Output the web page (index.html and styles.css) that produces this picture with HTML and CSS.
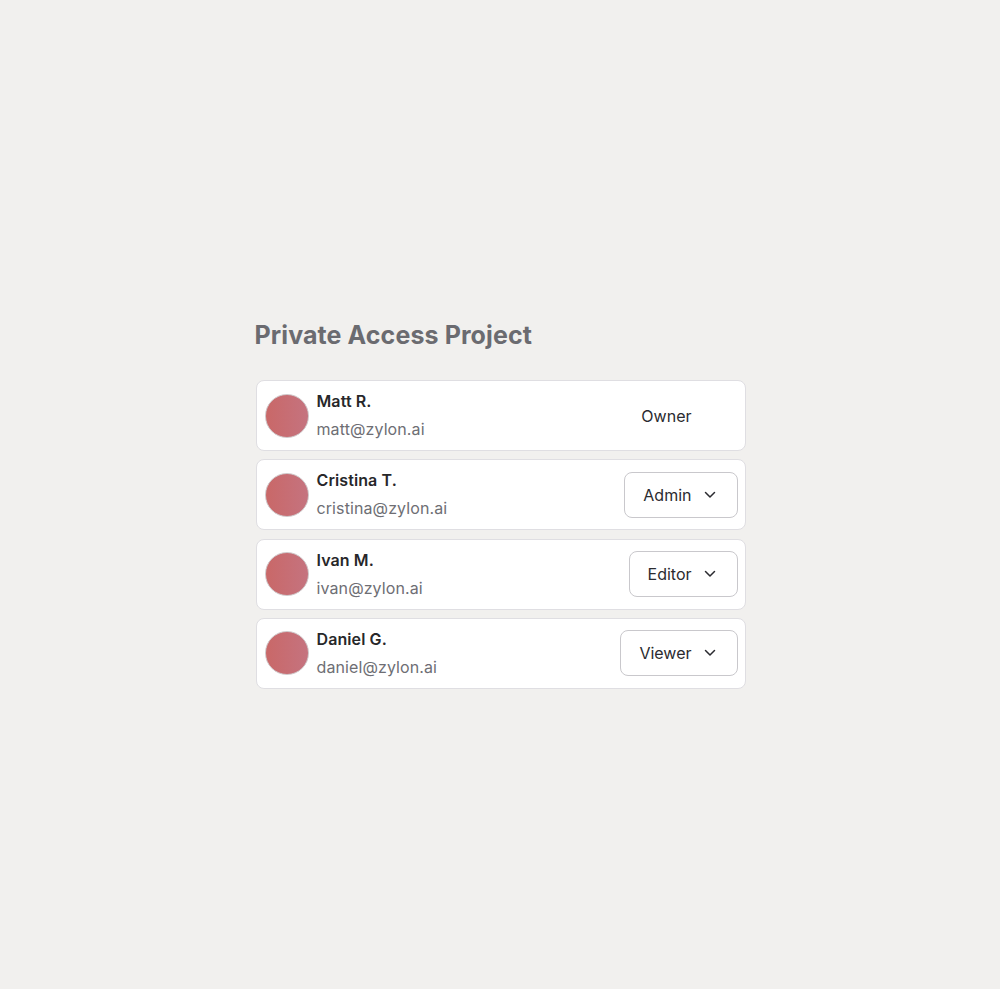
FILE: index.html
```html
<!DOCTYPE html>
<html>
<head>
<meta charset="utf-8">
<link rel="stylesheet" href="styles.css">
</head>
<body>
<main class="panel">
  <h1 class="title">Private Access Project</h1>
  <ul class="members">
    <li class="member">
      <div class="avatar"></div>
      <div class="info"><div class="name">Matt R.</div><div class="email">matt@zylon.ai</div></div>
      <span class="role-static">Owner</span>
    </li>
    <li class="member">
      <div class="avatar"></div>
      <div class="info"><div class="name">Cristina T.</div><div class="email">cristina@zylon.ai</div></div>
      <button class="role">Admin<svg class="chev" viewBox="0 0 12 8" width="12" height="8"><path d="M1.5 1.5 6 6l4.5-4.5" fill="none" stroke="#2b2b30" stroke-width="1.5" stroke-linecap="round" stroke-linejoin="round"/></svg></button>
    </li>
    <li class="member">
      <div class="avatar"></div>
      <div class="info"><div class="name">Ivan M.</div><div class="email">ivan@zylon.ai</div></div>
      <button class="role">Editor<svg class="chev" viewBox="0 0 12 8" width="12" height="8"><path d="M1.5 1.5 6 6l4.5-4.5" fill="none" stroke="#2b2b30" stroke-width="1.5" stroke-linecap="round" stroke-linejoin="round"/></svg></button>
    </li>
    <li class="member">
      <div class="avatar"></div>
      <div class="info"><div class="name">Daniel G.</div><div class="email">daniel@zylon.ai</div></div>
      <button class="role">Viewer<svg class="chev" viewBox="0 0 12 8" width="12" height="8"><path d="M1.5 1.5 6 6l4.5-4.5" fill="none" stroke="#2b2b30" stroke-width="1.5" stroke-linecap="round" stroke-linejoin="round"/></svg></button>
    </li>
  </ul>
</main>
</body>
</html>
```
FILE: styles.css
```css
html, body {
  margin: 0;
  padding: 0;
  background: #f1f0ee;
  font-family: Inter, "Noto Sans", sans-serif;
}
body {
  display: flex;
  justify-content: center;
  padding-top: 318px;
}
.panel {
  width: 490px;
  margin-left: 1px;
}
.title {
  margin: 0 0 28px -1px;
  font-size: 25px;
  line-height: 34px;
  font-weight: 700;
  color: #6b6b70;
  letter-spacing: 0.1px;
}
.members {
  list-style: none;
  margin: 0;
  padding: 0;
  display: flex;
  flex-direction: column;
  gap: 8.3px;
}
.member {
  display: flex;
  align-items: center;
  height: 71px;
  box-sizing: border-box;
  background: #fff;
  border: 1px solid #dfdee2;
  border-radius: 8px;
  padding: 0 7px 0 8px;
}
.avatar {
  width: 42px;
  height: 42px;
  border-radius: 50%;
  background: linear-gradient(90deg, #c96868 0%, #c5737f 100%);
  border: 1px solid #cfc7c9;
  flex: none;
}
.info {
  margin-left: 8px;
  flex: 1;
  padding-bottom: 1px;
}
.name {
  font-size: 16px;
  font-weight: 600;
  color: #27272a;
  line-height: 20px;
  letter-spacing: 0.1px;
}
.email {
  font-size: 16px;
  color: #6e6e74;
  line-height: 20px;
  margin-top: 8px;
  letter-spacing: 0.1px;
}
.role-static {
  font-size: 16px;
  color: #2b2b30;
  margin-right: 46px;
}
.role {
  display: flex;
  align-items: center;
  gap: 12px;
  height: 46px;
  box-sizing: border-box;
  padding: 0 21px 0 18px;
  background: #fff;
  border: 1px solid #c9c8cc;
  border-radius: 8px;
  font-family: inherit;
  font-size: 16px;
  color: #2b2b30;
}
.chev {
  display: block;
}
```
